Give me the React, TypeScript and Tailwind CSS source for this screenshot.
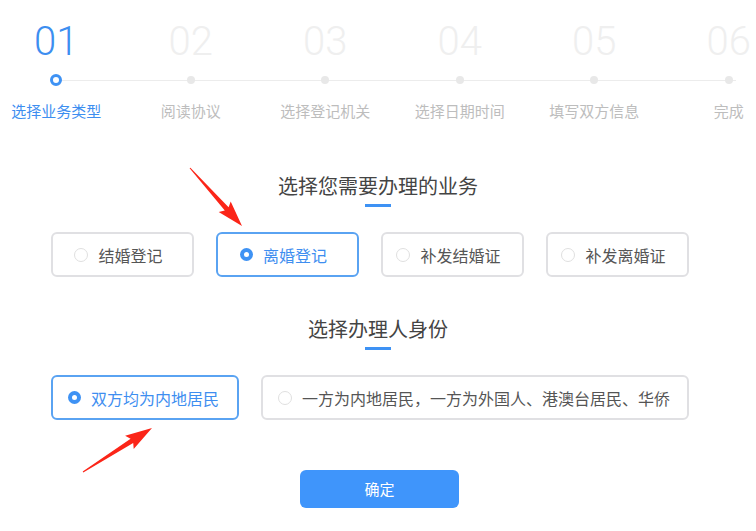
import React from 'react'

const steps = [
    { no: '01', label: '选择业务类型' },
    { no: '02', label: '阅读协议' },
    { no: '03', label: '选择登记机关' },
    { no: '04', label: '选择日期时间' },
    { no: '05', label: '填写双方信息' },
    { no: '06', label: '完成' },
]

const businessTypes = ['结婚登记', '离婚登记', '补发结婚证', '补发离婚证']

const Radio = ({ checked }: { checked: boolean }) =>
    checked ? (
        <span className="flex h-[13px] w-[13px] items-center justify-center rounded-full bg-[#3e92f4]">
            <span className="h-[5px] w-[5px] rounded-full bg-white" />
        </span>
    ) : (
        <span className="h-[14px] w-[14px] rounded-full border border-[#e0e0e0] bg-white" />
    )

const Option = ({ text, checked, className }: { text: string; checked: boolean; className: string }) => (
    <div
        className={`flex h-[45px] items-center gap-[10px] rounded-[6px] border-2 bg-white text-[16px] ${
            checked ? 'border-[#5aa3f2] text-[#3e8ef0]' : 'border-[#e0e0e3] text-[#555]'
        } ${className}`}
    >
        <Radio checked={checked} />
        <span>{text}</span>
    </div>
)

const SectionTitle = ({ text }: { text: string }) => (
    <div className="flex flex-col items-center">
        <h2 className="text-[20px] leading-[28px] text-[#444]">{text}</h2>
        <span className="mt-[4px] h-[3px] w-[26px] bg-[#3e92f4]" />
    </div>
)

export default function App() {
    return (
        <div
            className="relative h-[531px] w-[756px] overflow-hidden bg-white"
            style={{ fontFamily: '"Noto Sans CJK SC", "Noto Sans", sans-serif' }}
        >
            {/* steps */}
            <div className="relative ml-[-11px] flex pt-[22px]">
                <div className="absolute left-[67px] top-[80px] h-px w-[680px] bg-[#ececec]" />
                {steps.map((s, i) => (
                    <div key={s.no} className="relative flex w-[134.5px] shrink-0 flex-col items-center">
                        <span
                            className={`text-[40px] font-light leading-[40px] ${i === 0 ? 'text-[#3d8ef0]' : 'text-[#efefef]'}`}
                            style={{ fontFamily: 'Roboto, "Noto Sans", sans-serif' }}
                        >
                            {s.no}
                        </span>
                        <div className="flex h-[36px] items-center justify-center">
                            {i === 0 ? (
                                <span className="h-[12px] w-[12px] rounded-full border-[3px] border-[#3e92f4] bg-white" />
                            ) : (
                                <span className="h-[8px] w-[8px] rounded-full bg-[#e8e8e8]" />
                            )}
                        </div>
                        <span
                            className={`mt-[2px] text-[15px] leading-[22px] ${i === 0 ? 'text-[#3d8ef0]' : 'text-[#bdbdbd]'}`}
                        >
                            {s.label}
                        </span>
                    </div>
                ))}
            </div>

            {/* business type */}
            <div className="mt-[50px]">
                <SectionTitle text="选择您需要办理的业务" />
                <div className="ml-[51px] mt-[25px] flex gap-[22px]">
                    {businessTypes.map((t) => (
                        <Option key={t} text={t} checked={t === '离婚登记'} className="w-[143px] justify-center pr-[8px]" />
                    ))}
                </div>
            </div>

            {/* identity */}
            <div className="mt-[38px]">
                <SectionTitle text="选择办理人身份" />
                <div className="ml-[51px] mt-[25px] flex gap-[22px]">
                    <Option text="双方均为内地居民" checked className="w-[188px] pl-[15px]" />
                    <Option
                        text="一方为内地居民，一方为外国人、港澳台居民、华侨"
                        checked={false}
                        className="w-[428px] pl-[15px]"
                    />
                </div>
            </div>

            <div className="mt-[50px] flex justify-center pl-[3px]">
                <button className="h-[38px] w-[159px] rounded-[6px] bg-[#3f95fb] text-[15px] text-white">确定</button>
            </div>

            {/* annotation arrows */}
            <svg className="pointer-events-none absolute left-0 top-0" width="756" height="531">
                <polygon
                    fill="#fb2518"
                    points="189.6,168.3 224.8,210.6 218.7,212.1 242,226 230.7,201.4 228.6,207.2 190.4,167.7"
                />
                <polygon
                    fill="#fb2518"
                    points="83.3,472.4 133.2,442.9 133.7,449.1 152,428 125.1,435.7 130.6,438.7 82.7,471.6"
                />
            </svg>
        </div>
    )
}
